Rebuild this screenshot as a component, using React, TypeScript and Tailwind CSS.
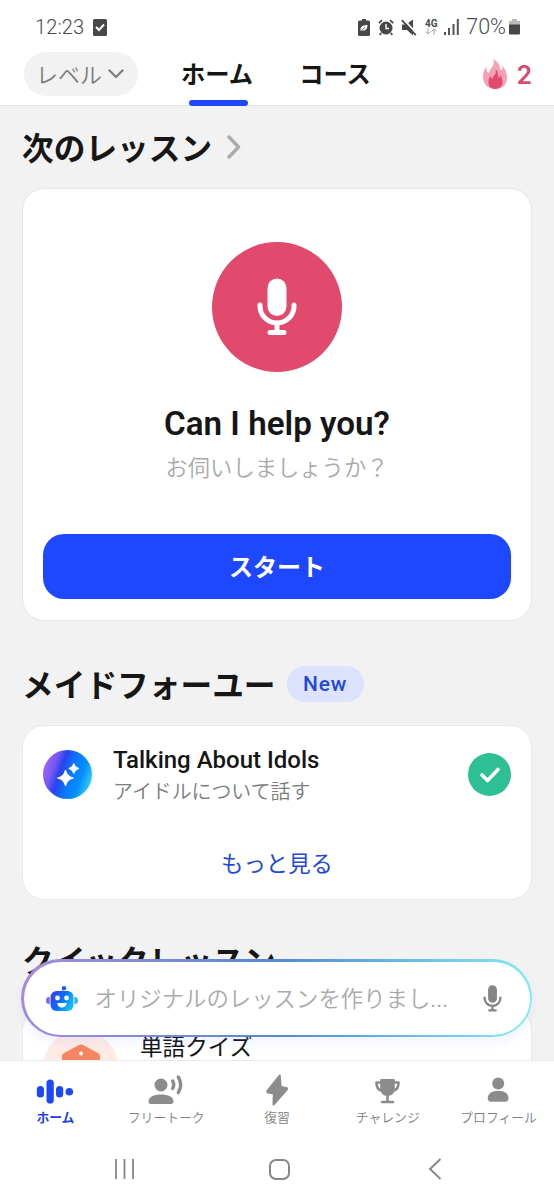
import type { ReactNode } from 'react';

const Mic = ({ className }: { className?: string }) => (
  <svg viewBox="0 0 40 58" className={className} fill="none">
    <rect x="10.500" y="0.500" width="19" height="37.500" rx="9.500" fill="currentColor" />
    <path d="M3 27v1a17 17 0 0 0 34 0v-1M20 45v9M13 54.500h14" stroke="currentColor" strokeWidth="5" strokeLinecap="round" />
  </svg>
);

function StatusBar() {
  return (
    <div className="flex h-[49px] items-center pt-[5px] pr-[34px] pl-[35px] text-[#4b4b4b]">
      <span className="font-[Roboto] text-[20px] leading-none font-light tracking-[0.1px]">12:23</span>
      <svg viewBox="0 0 14 17" className="ml-[9px] h-[17px] w-[14px]">
        <rect width="14" height="17" rx="1.500" fill="#484848" />
        <path d="M3 8l3 3 5-5.500" fill="none" stroke="#fff" strokeWidth="2" />
      </svg>
      <svg viewBox="0 0 12 17" className="ml-auto h-[17px] w-[12px]">
        <path d="M4 0h4v1.500h2.500A1.500 1.500 0 0 1 12 3v12.500a1.500 1.500 0 0 1-1.500 1.500h-9A1.500 1.500 0 0 1 0 15.500V3a1.500 1.500 0 0 1 1.500-1.500H4z" fill="#484848" />
        <path d="M2.500 12c-.5-4 2-6 7-6 0 4-2.500 6.500-6 5.500z" fill="#fff" />
        <path d="M2 13l5-4.500" stroke="#484848" strokeWidth="0.800" />
      </svg>
      <svg viewBox="0 0 16 17" className="ml-2 h-[17px] w-4" fill="none" stroke="#484848">
        <circle cx="8" cy="9" r="6.500" fill="#484848" stroke="none" />
        <path d="M8 5v4.500h3" stroke="#fff" strokeWidth="1.400" />
        <path d="M.8 4.200L4 1.200M15.200 4.200L12 1.200M3 14l-1.200 2M13 14l1.200 2" strokeWidth="1.700" />
      </svg>
      <svg viewBox="0 0 16 17" className="ml-[7px] h-[17px] w-4">
        <path d="M1 5.500h4L12 .5v16l-6-5.500H1z" fill="#484848" />
        <path d="M2.500.2l14 15.500" stroke="#fff" strokeWidth="1.800" />
        <path d="M.8 1.200l14 15" stroke="#484848" strokeWidth="1.700" />
      </svg>
      <div className="ml-[7px] flex w-[14px] flex-col items-center">
        <span className="font-[Roboto] text-[10px] leading-[9px] font-bold">4G</span>
        <svg viewBox="0 0 12 7" className="h-[7px] w-3" fill="none" stroke="#aaa" strokeWidth="1">
          <path d="M3 0v6M.5 3.500L3 6l2.500-2.500M9 7V1M6.500 3.500L9 1l2.500 2.500" />
        </svg>
      </div>
      <svg viewBox="0 0 15 16" className="ml-[6px] h-4 w-[15px]" fill="#555">
        <rect y="13" width="2" height="3" />
        <rect x="4" y="9" width="2" height="7" />
        <rect x="8.500" y="5" width="2" height="11" />
        <rect x="12.800" width="2" height="16" />
      </svg>
      <span className="ml-[7px] font-[Roboto] text-[21.500px] leading-none font-light">70%</span>
      <svg viewBox="0 0 11 16" className="ml-[3px] h-4 w-[11px]">
        <path d="M3 0h5v2h3v4H0V2h3z" fill="#bbb" />
        <path d="M0 5.500h11V14.500a1 1 0 0 1-1 1H1a1 1 0 0 1-1-1z" fill="#484848" />
      </svg>
    </div>
  );
}

function TopTabs() {
  return (
    <div className="flex h-14 items-start text-[24.300px] leading-9 font-bold text-[#161616]">
      <div className="mt-[3px] ml-6 flex h-11 w-[114px] items-center rounded-full bg-[#f2f2f2] pb-[3px] pl-3 text-[22px] font-[350] text-[#7c7c7c]">
        レベル
        <svg viewBox="0 0 16 10" className="mt-[3px] ml-[6px] h-[10px] w-4" fill="none" stroke="#808080" strokeWidth="2.400" strokeLinecap="round" strokeLinejoin="round">
          <path d="M1.500 1.500L8 8l6.500-6.500" />
        </svg>
      </div>
      <div className="relative ml-[43px] flex h-full flex-col items-center pt-[6px]">
        ホーム
        <div className="absolute -bottom-px left-[8px] h-[6px] w-[59px] rounded-full bg-[#1e48f7]" />
      </div>
      <div className="ml-[46px] pt-[6px]">コース</div>
      <div className="mt-[10px] ml-auto flex items-start pr-[22px]">
        <svg viewBox="0 0 24 30" className="h-[30px] w-6">
          <path d="M10 0c8 4 6 9 8 11 2 0 2-2 1-5 4 5 5 9 5 13 0 7-5 11-12 11S0 25 0 18C0 13 2 9 4 8c-1 4 0 5 2 6 1-6 7-7 4-14z" fill="#f6a0b5" />
          <path d="M12.500 10c4 3 1 7 4 9l1-3c1.500 3 2 5 2 7 0 4-3 7-7.500 7S5.500 27 5.500 23c0-3 1-5 2.500-6 0 2 .5 2.500 1.500 3 .5-4 4.500-4 3-10z" fill="#e14a6c" />
        </svg>
        <span className="mt-px ml-[9px] font-[Inter] text-[25px] leading-[30px] font-semibold text-[#d94a72]">2</span>
      </div>
    </div>
  );
}

function RobotIcon() {
  return (
    <svg viewBox="0 0 32 25" className="h-[25px] w-8 shrink-0">
      <defs>
        <linearGradient id="bot" x1="0" y1="0" x2="1" y2="0.500">
          <stop offset="0.150" stopColor="#3347ee" />
          <stop offset="0.550" stopColor="#086cff" />
          <stop offset="1" stopColor="#13bdfb" />
        </linearGradient>
      </defs>
      <ellipse cx="3" cy="14.500" rx="3" ry="3.500" fill="#8361ef" />
      <ellipse cx="29" cy="14.500" rx="3" ry="3.500" fill="#3cb5e6" />
      <path d="M16 6l1.500-3" stroke="#2456f2" strokeWidth="1.500" />
      <circle cx="18" cy="2.300" r="2.200" fill="#2456f2" />
      <rect x="3.700" y="4.500" width="24.600" height="21" rx="6.500" fill="#fff" />
      <rect x="4.500" y="5" width="23" height="20" rx="6" fill="url(#bot)" />
      <circle cx="11.500" cy="12" r="2.400" fill="#fff" />
      <circle cx="20.500" cy="12" r="2.400" fill="#fff" />
      <path d="M11.300 17h9.400c0 6-9.400 6-9.400 0z" fill="#fff" />
    </svg>
  );
}

function NavItem({ label, active, children }: { label: string; active?: boolean; children: ReactNode }) {
  return (
    <div className={active ? 'flex w-[111px] flex-col items-center font-bold text-[#1e42e0]' : 'flex w-[111px] flex-col items-center font-[350] text-[#7e7e7e]'}>
      <svg viewBox="0 0 40 34" className="h-[34px] w-10 text-[#8c8c8c]" fill="currentColor">
        {children}
      </svg>
      <span className="text-[12.800px] leading-5 whitespace-nowrap">{label}</span>
    </div>
  );
}

export default function App() {
  return (
    <div className="flex h-[1200px] w-[554px] flex-col overflow-hidden bg-[#f2f2f2] font-['Noto_Sans_CJK_JP',sans-serif] text-[#161616]">
      <header className="relative z-10 h-[106px] shrink-0 border-b border-[#e4e4e4] bg-white">
        <StatusBar />
        <TopTabs />
      </header>

      <main className="relative h-[954px] shrink-0 overflow-hidden px-[22px]">
        <div className="flex h-[82px] items-center pb-[3px] text-[31.700px] leading-[48px] font-bold">
          次のレッスン
          <svg viewBox="0 0 14 24" className="mt-[3px] ml-[15px] h-6 w-[14px]" fill="none" stroke="#acacac" strokeWidth="3.500" strokeLinecap="round" strokeLinejoin="round">
            <path d="M2 2l9.500 10L2 22" />
          </svg>
        </div>

        <section className="flex h-[433px] flex-col items-center rounded-[22px] border border-[#e6e6e6] bg-white px-5 pt-[53px]">
          <div className="flex size-[130px] shrink-0 items-center justify-center rounded-full bg-[#e14a6c] text-white">
            <Mic className="h-[58px] w-10" />
          </div>
          <h2 className="mt-[32px] font-[Roboto] text-[33.200px] leading-10 font-semibold">Can I help you?</h2>
          <p className="mt-[6px] text-[22.300px] leading-8 font-[350] text-[#aaa]">お伺いしましょうか？</p>
          <button className="mt-[52px] h-[65px] w-full rounded-[21px] bg-[#1d48ff] pb-[2px] text-[24px] font-bold text-white">スタート</button>
        </section>

        <div className="flex h-[104px] items-center pt-[19px] text-[31.700px] leading-[48px] font-bold">
          メイドフォーユー
          <span className="mt-[3px] ml-[11px] flex h-9 w-[77px] items-center justify-center rounded-full bg-[#dde3fd] font-[Roboto] text-[21px] font-medium tracking-[0.700px] text-[#2448d8]">New</span>
        </div>

        <section className="h-[175px] rounded-[22px] border border-[#e9e9e9] bg-white px-5">
          <div className="flex pt-[19px]">
            <svg viewBox="0 0 49 49" className="mt-[5px] size-[49px]">
              <defs>
                <linearGradient id="spark" x1="0" y1="0.250" x2="1" y2="0.600">
                  <stop offset="0" stopColor="#a568f5" />
                  <stop offset="0.220" stopColor="#7858f4" />
                  <stop offset="0.370" stopColor="#2844ed" />
                  <stop offset="0.600" stopColor="#087aff" />
                  <stop offset="0.800" stopColor="#0790fd" />
                  <stop offset="1" stopColor="#30cdf9" />
                </linearGradient>
              </defs>
              <circle cx="24.500" cy="24.500" r="24.500" fill="url(#spark)" />
              <path d="M22.500 20q1.500 6.500 8 8-6.500 1.500-8 8-1.500-6.500-8-8 6.500-1.500 8-8zM30.800 13.500q1 4 5 5-4 1-5 5-1-4-5-5 4-1 5-5z" fill="#fff" stroke="#fff" strokeLinejoin="round" />
            </svg>
            <div className="ml-[21px]">
              <h3 className="font-[Roboto] text-[24px] leading-[30px] font-medium">Talking About Idols</h3>
              <p className="text-[19.900px] leading-8 font-[350] text-[#7c7c7c]">アイドルについて話す</p>
            </div>
            <div className="mt-2 ml-auto flex size-[43px] items-center justify-center rounded-full bg-[#2ebf94]">
              <svg viewBox="0 0 20 16" className="h-4 w-5" fill="none" stroke="#fff" strokeWidth="3.600" strokeLinecap="round" strokeLinejoin="round">
                <path d="M2 8l5.500 5.500L18 2.500" />
              </svg>
            </div>
          </div>
          <div className="mt-[37px] text-center text-[22.400px] leading-9 text-[#2248d8]">もっと見る</div>
        </section>

        <div className="flex h-[108px] items-center pt-[9px] text-[31.700px] leading-[48px] font-bold">クイックレッスン</div>

        <section className="flex h-[200px] rounded-t-[22px] border border-[#e9e9e9] bg-white pl-5">
          <div className="mt-[21px] flex size-[75px] justify-center rounded-full bg-[#ffebe5] pt-[14px]">
            <svg viewBox="0 0 38 38" className="size-[38px]">
              <path d="M0 12q0-2 2-3L17.500.8q1.500-.8 3 0L36 9q2 1 2 3v26H0z" fill="#f68660" />
              <circle cx="19" cy="9.500" r="2" fill="#fff" />
            </svg>
          </div>
          <span className="mt-[19px] ml-[22px] text-[22.600px] leading-9">単語クイズ</span>
        </section>

        <div className="absolute top-[853px] left-[21px] h-[78px] w-[511px] rounded-full bg-gradient-to-r from-[#a48bdf] via-[#5289d1] to-[#83ebf1] p-[2.500px] shadow-[0_6px_10px_rgba(70,100,255,0.07)]">
          <div className="flex h-full items-center rounded-full bg-white pr-[28px] pl-[22px]">
            <RobotIcon />
            <span className="ml-[17px] text-[22.400px] leading-8 font-[350] whitespace-nowrap text-[#aaa]">オリジナルのレッスンを作りまし<span className="font-[Roboto] font-normal">...</span></span>
            <Mic className="ml-auto h-[27px] w-[19px] shrink-0 text-[#858585]" />
          </div>
        </div>
      </main>

      <footer className="h-[140px] shrink-0 border-t border-[#e9e9e9] bg-white">
        <nav className="flex h-[78px] w-full pt-[12px]">
          <NavItem label="ホーム" active>
            <g fill="#1e48f7">
              <rect x="1.800" y="13" width="7.200" height="11.500" rx="3.500" />
              <rect x="11.500" y="6.500" width="7.300" height="24" rx="3.600" />
              <rect x="21" y="13" width="7.200" height="11.500" rx="3.500" />
              <circle cx="34.300" cy="18.700" r="3.800" />
            </g>
          </NavItem>
          <NavItem label="フリートーク">
            <circle cx="15" cy="12" r="6.500" />
            <path d="M2.500 28.500C2.500 24 8 21.500 15 21.500S27.500 24 27.500 28.500c0 1.500-.8 2.500-2.300 2.500H4.800c-1.500 0-2.300-1-2.300-2.500z" />
            <path d="M26.700 8q2 3.800 0 7.500M32.300 4q4.700 7.800 0 15.500" fill="none" stroke="currentColor" strokeWidth="3.400" strokeLinecap="round" />
          </NavItem>
          <NavItem label="復習">
            <path d="M22.800 2.500L10.500 17.800c-.5.800-.3 1.400.5 1.700l5.800 1L16.500 31.500 29.800 16.500c.4-.8.200-1.200-.5-1.500l-5.600-1z" stroke="currentColor" strokeWidth="2" strokeLinejoin="round" />
          </NavItem>
          <NavItem label="チャレンジ">
            <g transform="translate(-0.500 1)">
              <path d="M13.500 5h13q.8 0 .8 1v8c0 5-3 8-7.300 8s-7.300-3-7.300-8V6q0-1 .8-1z" />
              <path d="M13 8.500H9c0 4.500 1.500 7.500 5 8M27 8.500h4c0 4.500-1.500 7.500-5 8M20 21v7M14.500 28h11" fill="none" stroke="currentColor" strokeWidth="2.600" strokeLinecap="round" strokeLinejoin="round" />
            </g>
          </NavItem>
          <NavItem label="プロフィール">
            <circle cx="19.200" cy="10.500" r="6" />
            <path d="M8.700 25.200c0-4.500 4-7.500 10.500-7.500s10.300 3 10.300 7.500c0 2-1.200 3.500-3.200 3.500H11.900c-2 0-3.200-1.500-3.200-3.500z" />
          </NavItem>
        </nav>
        <div className="flex items-center pt-[19px] pl-[114px] text-[#868686]">
          <svg viewBox="0 0 21 22" className="h-[22px] w-[21px]" stroke="currentColor" strokeWidth="1.800">
            <path d="M2 1v20M10.500 1v20M19 1v20" />
          </svg>
          <div className="ml-[134px] size-[21px] rounded-[7px] border-2 border-[#868686]" />
          <svg viewBox="0 0 14 22" className="ml-[138px] h-[22px] w-[14px]" fill="none" stroke="currentColor" strokeWidth="1.900">
            <path d="M12.500 1L2 11l10.500 10" />
          </svg>
        </div>
      </footer>
    </div>
  );
}
